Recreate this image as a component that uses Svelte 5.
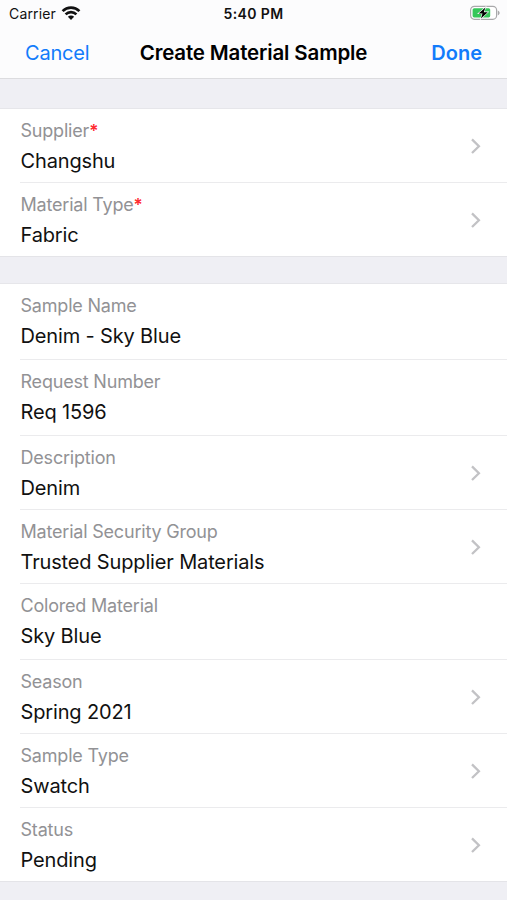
<script>
  const groups = [
    [
      { label: 'Supplier', value: 'Changshu', required: true, link: true },
      { label: 'Material Type', value: 'Fabric', required: true, link: true },
    ],
    [
      { label: 'Sample Name', value: 'Denim - Sky Blue' },
      { label: 'Request Number', value: 'Req 1596' },
      { label: 'Description', value: 'Denim', link: true },
      { label: 'Material Security Group', value: 'Trusted Supplier Materials', link: true },
      { label: 'Colored Material', value: 'Sky Blue' },
      { label: 'Season', value: 'Spring 2021', link: true },
      { label: 'Sample Type', value: 'Swatch', link: true },
      { label: 'Status', value: 'Pending', link: true },
    ],
  ];
</script>

<div class="screen">
  <header>
    <div class="status">
      <div class="carrier">
        <span>Carrier</span>
        <svg width="20" height="16" viewBox="0 0 20 16">
          <g fill="none" stroke="#111" stroke-width="2.7">
            <path d="M1.6 6.1a12 12 0 0 1 16.8 0" />
            <path d="M4.6 9.4a7.7 7.7 0 0 1 10.8 0" />
          </g>
          <path d="M10 15l-3.1-3.2a4.4 4.4 0 0 1 6.2 0z" fill="#111" />
        </svg>
      </div>
      <div class="time">5:40 PM</div>
      <div class="battery">
        <svg width="32" height="16" viewBox="0 0 32 16">
          <rect x="1.6" y="1.3" width="26" height="13" rx="3.8" fill="#fff" stroke="#a9a9ab" stroke-width="1.2" />
          <path d="M28.8 5.4c2.4.8 2.4 4 0 4.8z" fill="#a9a9ab" />
          <rect x="3.6" y="3.2" width="17.6" height="9.2" rx="1.6" fill="#35c759" />
          <path d="M16.4 2.4L9.6 8.5h3.9l-1.6 5 6.9-6.3h-4z" fill="#000" stroke="#fff" stroke-width="1.2" paint-order="stroke" />
        </svg>
      </div>
    </div>
    <nav>
      <button class="cancel">Cancel</button>
      <h1>Create Material Sample</h1>
      <button class="done">Done</button>
    </nav>
  </header>

  {#each groups as rows}
    <section>
      {#each rows as row}
        <div class="row" class:link={row.link}>
          <div class="text">
            <div class="label">{row.label}{#if row.required}<span class="star">*</span>{/if}</div>
            <div class="value">{row.value}</div>
          </div>
          {#if row.link}
            <svg class="chevron" width="10" height="16" viewBox="0 0 10 16">
              <path d="M1 1.4L7.9 8.2 1 15" fill="none" stroke="#c2c2c5" stroke-width="2.3" />
            </svg>
          {/if}
        </div>
      {/each}
    </section>
  {/each}
</div>

<style>
  :global(body) {
    background: #efeff4;
  }

  .screen {
    height: 900px;
    overflow: hidden;
    background: #efeff4;
    color: #111;
    font-family: Inter, "Liberation Sans", sans-serif;
  }

  header {
    box-sizing: border-box;
    height: 79px;
    background: #fcfcfd;
    border-bottom: 1px solid #dcdcdf;
  }

  .status {
    display: grid;
    grid-template-columns: 1fr auto 1fr;
    align-items: center;
    height: 27px;
    padding: 0 6px 0 9px;
    font-size: 14px;
  }

  .carrier {
    display: flex;
    align-items: center;
    gap: 5px;
    letter-spacing: 0.15px;
  }

  .carrier svg {
    margin-bottom: 2px;
  }

  .time {
    margin-right: 3px;
    font-size: 14px;
    font-weight: 600;
    letter-spacing: 0.4px;
  }

  .battery {
    display: flex;
    justify-content: flex-end;
    margin-bottom: 1px;
  }

  nav {
    display: grid;
    grid-template-columns: 1fr auto 1fr;
    align-items: center;
    height: 51px;
    padding: 0 25px;
  }

  button {
    padding: 0;
    border: 0;
    background: none;
    color: #127bfb;
    font: inherit;
    font-size: 20px;
  }

  .cancel {
    justify-self: start;
    letter-spacing: -0.2px;
  }

  .done {
    justify-self: end;
    font-weight: 600;
  }

  h1 {
    margin: 0;
    color: #000;
    font-size: 20.5px;
    font-weight: 600;
    letter-spacing: -0.15px;
  }

  section {
    margin-top: 29px;
    background: #fff;
    border-top: 1px solid #e6e6ea;
    border-bottom: 1px solid #e4e4e8;
  }

  section + section {
    margin-top: 26px;
  }

  .row {
    display: flex;
    align-items: center;
    box-sizing: border-box;
    height: 76px;
    margin-left: 20px;
    padding: 0 26px 0 0.5px;
    border-bottom: 1px solid #ebebed;
  }

  .row.link {
    height: 74px;
  }

  .row:last-child {
    height: 73px;
    border-bottom: 0;
  }

  .text {
    flex: 1;
    align-self: flex-start;
    padding-top: 7px;
  }

  .label {
    color: #929295;
    font-size: 18px;
    line-height: 30px;
    letter-spacing: -0.2px;
  }

  .star {
    color: #ff2b30;
    font-weight: 600;
    font-size: 17px;
  }

  .value {
    font-size: 20px;
    line-height: 31px;
    letter-spacing: -0.15px;
  }
</style>
